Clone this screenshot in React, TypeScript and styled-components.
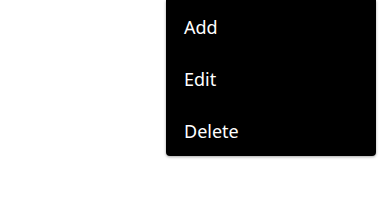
import { createGlobalStyle } from "styled-components";
import styled from "styled-components";

const GlobalStyle = createGlobalStyle`
  html, body {
    margin: 0;
    padding: 0;
    background: #ffffff;
    font-family: "Noto Sans", "Open Sans", sans-serif;
  }
`;

const Page = styled.div`
  width: 384px;
  height: 216px;
  display: flex;
  justify-content: flex-end;
  align-items: flex-start;
  padding-right: 8px;
  box-sizing: border-box;
`;

const Menu = styled.ul`
  list-style: none;
  margin: 0;
  padding: 0;
  width: 210px;
  background: #000000;
  border-radius: 0 0 4px 4px;
  box-shadow: 0 1px 3px rgba(0, 0, 0, 0.35);
`;

const Item = styled.li`
  height: 52px;
  display: flex;
  align-items: center;
  padding: 1px 18px 0;
  box-sizing: border-box;
  color: #ffffff;
  font-size: 18px;
  cursor: pointer;
`;

const items = ["Add", "Edit", "Delete"];

export default function App() {
  return (
    <>
      <GlobalStyle />
      <Page>
        <Menu>
          {items.map((label) => (
            <Item key={label}>{label}</Item>
          ))}
        </Menu>
      </Page>
    </>
  );
}
